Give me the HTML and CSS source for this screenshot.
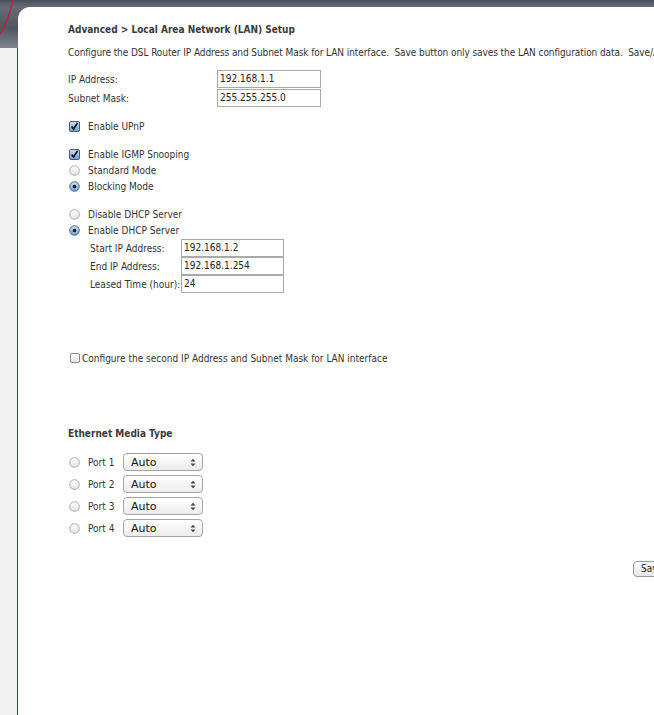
FILE: index.html
```html
<!DOCTYPE html>
<html>
<head>
<meta charset="utf-8">
<link rel="stylesheet" href="styles.css">
</head>
<body>
<div class="page">
  <div class="side">
    <div class="side-top">
      <svg width="18" height="48" viewBox="0 0 18 48"><path d="M0 34 Q8 22 13 0" fill="none" stroke="#d01c2c" stroke-width="1.3"/></svg>
    </div>
    <div class="side-rest"></div>
  </div>
  <div class="panel">
    <div class="title">Advanced &gt; Local Area Network (LAN) Setup</div>
    <div class="desc">Configure the DSL Router IP Address and Subnet Mask for LAN interface.&nbsp; Save button only saves the LAN configuration data.&nbsp; Save/Apply button saves the LAN configuration data and reboots the router to make the new configuration effective.</div>

    <div class="ip-table">
      <div class="frow"><span class="flabel">IP Address:</span><span class="field w104">192.168.1.1</span></div>
      <div class="frow"><span class="flabel">Subnet Mask:</span><span class="field w104">255.255.255.0</span></div>
    </div>

    <div class="opt gap-a">
      <svg class="ctl" width="11" height="11" viewBox="0 0 11 11"><defs><linearGradient id="gb" x1="0" y1="0" x2="0" y2="1"><stop offset="0" stop-color="#cfe0f7"/><stop offset="1" stop-color="#6f9ddc"/></linearGradient></defs><rect x="0.5" y="0.5" width="10" height="10" rx="1.5" fill="url(#gb)" stroke="#4d5a6e"/><path d="M2.6 5.4 L4.6 8 L8.6 1.8" fill="none" stroke="#111" stroke-width="1.6"/></svg>
      <span>Enable UPnP</span>
    </div>

    <div class="opt gap-b">
      <svg class="ctl" width="11" height="11" viewBox="0 0 11 11"><rect x="0.5" y="0.5" width="10" height="10" rx="1.5" fill="url(#gb)" stroke="#4d5a6e"/><path d="M2.6 5.4 L4.6 8 L8.6 1.8" fill="none" stroke="#111" stroke-width="1.6"/></svg>
      <span>Enable IGMP Snooping</span>
    </div>
    <div class="opt">
      <svg class="ctl" width="11" height="11" viewBox="0 0 11 11"><defs><linearGradient id="gw" x1="0" y1="0" x2="0" y2="1"><stop offset="0" stop-color="#ffffff"/><stop offset="1" stop-color="#e4e4e4"/></linearGradient></defs><circle cx="5.5" cy="5.5" r="4.8" fill="url(#gw)" stroke="#a3a3a3" stroke-width="0.9"/></svg>
      <span>Standard Mode</span>
    </div>
    <div class="opt">
      <svg class="ctl" width="11" height="11" viewBox="0 0 11 11"><circle cx="5.5" cy="5.5" r="4.8" fill="url(#gb)" stroke="#4d5a6e" stroke-width="0.9"/><circle cx="5.5" cy="5.5" r="1.8" fill="#1a1a1a"/></svg>
      <span>Blocking Mode</span>
    </div>

    <div class="opt gap-b">
      <svg class="ctl" width="11" height="11" viewBox="0 0 11 11"><circle cx="5.5" cy="5.5" r="4.8" fill="url(#gw)" stroke="#a3a3a3" stroke-width="0.9"/></svg>
      <span>Disable DHCP Server</span>
    </div>
    <div class="opt">
      <svg class="ctl" width="11" height="11" viewBox="0 0 11 11"><circle cx="5.5" cy="5.5" r="4.8" fill="url(#gb)" stroke="#4d5a6e" stroke-width="0.9"/><circle cx="5.5" cy="5.5" r="1.8" fill="#1a1a1a"/></svg>
      <span>Enable DHCP Server</span>
    </div>

    <div class="dhcp-table">
      <div class="drow"><span class="dlabel">Start IP Address:</span><span class="field w103">192.168.1.2</span></div>
      <div class="drow"><span class="dlabel">End IP Address:</span><span class="field w103">192.168.1.254</span></div>
      <div class="drow"><span class="dlabel">Leased Time (hour):</span><span class="field w103">24</span></div>
    </div>

    <div class="second">
      <svg class="ctl2" width="10" height="10" viewBox="0 0 10 10"><rect x="0.5" y="0.5" width="9" height="9" rx="1.5" fill="url(#gw)" stroke="#8c8c8c"/></svg>
      <span>Configure the second IP Address and Subnet Mask for LAN interface</span>
    </div>

    <div class="title eth">Ethernet Media Type</div>

    <div class="ports">
      <div class="port"><svg class="ctl" width="11" height="11" viewBox="0 0 11 11"><circle cx="5.5" cy="5.5" r="4.8" fill="url(#gw)" stroke="#a3a3a3" stroke-width="0.9"/></svg><span class="pname">Port 1</span><span class="select"><span>Auto</span><svg width="6" height="9" viewBox="0 0 6 9"><path d="M0.5 3.5 L3 0.8 L5.5 3.5 Z M0.5 5.5 L3 8.2 L5.5 5.5 Z" fill="#444"/></svg></span></div>
      <div class="port"><svg class="ctl" width="11" height="11" viewBox="0 0 11 11"><circle cx="5.5" cy="5.5" r="4.8" fill="url(#gw)" stroke="#a3a3a3" stroke-width="0.9"/></svg><span class="pname">Port 2</span><span class="select"><span>Auto</span><svg width="6" height="9" viewBox="0 0 6 9"><path d="M0.5 3.5 L3 0.8 L5.5 3.5 Z M0.5 5.5 L3 8.2 L5.5 5.5 Z" fill="#444"/></svg></span></div>
      <div class="port"><svg class="ctl" width="11" height="11" viewBox="0 0 11 11"><circle cx="5.5" cy="5.5" r="4.8" fill="url(#gw)" stroke="#a3a3a3" stroke-width="0.9"/></svg><span class="pname">Port 3</span><span class="select"><span>Auto</span><svg width="6" height="9" viewBox="0 0 6 9"><path d="M0.5 3.5 L3 0.8 L5.5 3.5 Z M0.5 5.5 L3 8.2 L5.5 5.5 Z" fill="#444"/></svg></span></div>
      <div class="port"><svg class="ctl" width="11" height="11" viewBox="0 0 11 11"><circle cx="5.5" cy="5.5" r="4.8" fill="url(#gw)" stroke="#a3a3a3" stroke-width="0.9"/></svg><span class="pname">Port 4</span><span class="select"><span>Auto</span><svg width="6" height="9" viewBox="0 0 6 9"><path d="M0.5 3.5 L3 0.8 L5.5 3.5 Z M0.5 5.5 L3 8.2 L5.5 5.5 Z" fill="#444"/></svg></span></div>
    </div>

    <div class="buttons">
      <span class="btn">Save/Apply</span>
    </div>
  </div>
</div>
</body>
</html>
```

FILE: styles.css
```css
html, body {
  margin: 0;
  padding: 0;
}
body {
  width: 654px;
  height: 715px;
  overflow: hidden;
  font-family: "DejaVu Sans Condensed", "DejaVu Sans", sans-serif;
  font-stretch: condensed;
  font-size: 10px;
  color: #333;
}
.page {
  display: flex;
  height: 715px;
  background: linear-gradient(to bottom, #4a505c 0, #656c78 7px, #4f5560 28px, #7f858e 48px, #f2f2f2 48px);
}
.side {
  width: 18px;
  flex: none;
  display: flex;
  flex-direction: column;
}
.side-top {
  height: 48px;
  flex: none;
}
.side-top svg {
  display: block;
}
.side-rest {
  flex: 1;
  background: #f2f2f2;
  border-right: 1px solid #9c1a30;
  width: 17px;
}
.panel {
  flex: 1;
  margin-top: 7px;
  background: #fff;
  border-top-left-radius: 12px;
  padding-left: 50px;
  min-width: 0;
  overflow: hidden;
  white-space: nowrap;
}
.title {
  font-weight: bold;
  line-height: 16px;
  margin-top: 15px;
  color: #3a3a3a;
}
.desc {
  line-height: 16px;
  margin-top: 7px;
  letter-spacing: -0.08px;
}
.ip-table {
  margin-top: 9px;
  display: flex;
  flex-direction: column;
  gap: 1px;
}
.frow, .drow {
  display: flex;
  align-items: center;
  height: 18px;
}
.flabel {
  width: 149px;
  flex: none;
}
.field {
  box-sizing: border-box;
  height: 18px;
  line-height: 16px;
  border: 1px solid #a9a9a9;
  padding-left: 2px;
  color: #222;
  background: #fff;
}
.w104 { width: 104px; }
.w103 { width: 103px; }
.opt {
  display: flex;
  align-items: center;
  height: 16px;
}
.ctl {
  flex: none;
  margin-left: 1px;
  margin-right: 8px;
  display: block;
}
.gap-a { margin-top: 11px; }
.gap-b { margin-top: 12px; }
.dhcp-table {
  margin-top: 1px;
  padding-left: 22px;
}
.dlabel {
  width: 91px;
  flex: none;
}
.second {
  margin-top: 57px;
  display: flex;
  align-items: center;
  height: 16px;
}
.ctl2 {
  flex: none;
  margin-left: 2px;
  margin-right: 2px;
  display: block;
}
.title.eth {
  margin-top: 60px;
}
.ports {
  margin-top: 9px;
}
.port {
  display: flex;
  align-items: center;
  height: 22px;
}
.pname {
  width: 35px;
  flex: none;
}
.select {
  box-sizing: border-box;
  width: 80px;
  height: 18px;
  display: flex;
  align-items: center;
  justify-content: space-between;
  padding: 0 6px 0 7px;
  border: 1px solid #a5a5a5;
  border-radius: 4px;
  background: linear-gradient(to bottom, #ffffff, #ececec);
  font-family: "DejaVu Sans", sans-serif;
  font-stretch: normal;
  font-size: 11px;
  color: #111;
}
.select svg {
  display: block;
}
.buttons {
  margin-top: 22px;
  padding-left: 565px;
}
.btn {
  display: inline-block;
  box-sizing: border-box;
  height: 16px;
  line-height: 14px;
  padding: 0 6px 0 7px;
  border: 1px solid #9a9a9a;
  border-radius: 4px;
  background: linear-gradient(to bottom, #ffffff, #e6e6e6);
  color: #222;
}
```
